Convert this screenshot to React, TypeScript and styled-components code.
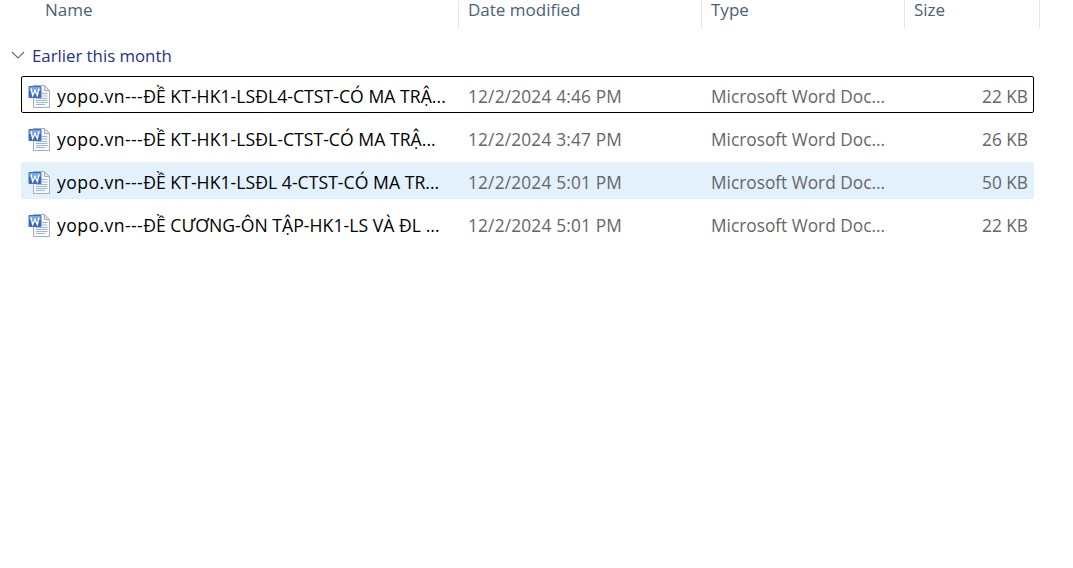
import React from "react";
import styled, { createGlobalStyle } from "styled-components";

const Global = createGlobalStyle`
  html, body { margin: 0; padding: 0; background: #fff; }
  body { font-family: "Open Sans", "Noto Sans", sans-serif; overflow: hidden; }
`;

const Page = styled.div`
  width: 1073px;
  height: 568px;
  background: #fff;
  display: flex;
  flex-direction: column;
`;

const Header = styled.div`
  display: grid;
  grid-template-columns: 459px 243px 203px 135px;
  height: 29px;
`;

const HeaderCell = styled.div<{ $first?: boolean }>`
  font-size: 17px;
  line-height: 20px;
  color: #4c607a;
  padding-left: ${(p) => (p.$first ? "45px" : "9px")};
  border-right: 1px solid #e5e5e5;
  white-space: nowrap;
`;

const Group = styled.div`
  display: flex;
  align-items: center;
  height: 24px;
  margin-top: 14px;
  padding-left: 11px;
  gap: 7px;
  color: #1e3287;
  font-size: 16.8px;
`;

const List = styled.div`
  display: flex;
  flex-direction: column;
  gap: 6px;
  margin: 9px 0 0 21px;
  width: 1013px;
`;

const Row = styled.div<{ $focused?: boolean; $selected?: boolean }>`
  display: grid;
  grid-template-columns: 437px 243px 203px 130px;
  align-items: center;
  height: 37px;
  padding-top: 3px;
  box-sizing: border-box;
  border-radius: 2px;
  background: ${(p) => (p.$selected ? "#e3f1fc" : "transparent")};
  outline: ${(p) => (p.$focused ? "1px solid #000" : "none")};
  outline-offset: -1px;
  font-size: 17.3px;
`;

const NameCell = styled.div`
  display: flex;
  align-items: center;
  gap: 6px;
  padding-left: 7px;
  color: #000;
  min-width: 0;
`;

const NameText = styled.span`
  width: 395px;
  white-space: nowrap;
  overflow: hidden;
  flex: none;
  font-size: 17.6px;
  letter-spacing: 0.04px;
`;

const Prefix = styled.span`
  letter-spacing: 0.42px;
`;

const Muted = styled.div<{ $right?: boolean; $wide?: boolean }>`
  color: #666;
  white-space: nowrap;
  letter-spacing: ${(p) => (p.$wide ? "0.18px" : "0")};
  padding-left: ${(p) => (p.$right ? "0" : "10px")};
  padding-right: ${(p) => (p.$right ? "6px" : "0")};
  text-align: ${(p) => (p.$right ? "right" : "left")};
`;

const Chevron = () => (
  <svg width="14" height="9" viewBox="0 0 14 9" fill="none" stroke="#6b6b6b" strokeWidth="1.1">
    <path d="M1 1l6 6 6-6" />
  </svg>
);

const WordIcon = () => (
  <svg width="23" height="23" viewBox="0 0 23 23">
    <path d="M5.5 0.5h11l5 5v17h-16z" fill="#f8fafd" stroke="#a3afbc" />
    <path d="M16.5 0.5v5h5z" fill="#dfe7ef" stroke="#a3afbc" />
    <path d="M14 8.5h5.5M14 11h5.5M8 13.5h11.5M8 15.5h11.5M8 17.5h11.5M8 19.5h9" stroke="#9db6d3" strokeWidth="1" />
    <rect x="0.5" y="1" width="13" height="12" rx="1" fill="#3a6cc0" />
    <rect x="1.5" y="2" width="11" height="4" fill="#7ba6e4" />
    <path d="M3 3.5l1.7 7 2.3-5 2.3 5 1.7-7" fill="none" stroke="#fff" strokeWidth="1.4" />
  </svg>
);

const rows = [
  { rest: "ĐỀ KT-HK1-LSĐL4-CTST-CÓ MA TRẬ...", date: "12/2/2024 4:46 PM", size: "22 KB", focused: true },
  { rest: "ĐỀ KT-HK1-LSĐL-CTST-CÓ MA TRẬ...", date: "12/2/2024 3:47 PM", size: "26 KB" },
  { rest: "ĐỀ KT-HK1-LSĐL 4-CTST-CÓ MA TR...", date: "12/2/2024 5:01 PM", size: "50 KB", selected: true },
  { rest: "ĐỀ CƯƠNG-ÔN TẬP-HK1-LS VÀ ĐL ...", date: "12/2/2024 5:01 PM", size: "22 KB" },
];

export default function App() {
  return (
    <Page>
      <Global />
      <Header>
        <HeaderCell $first>Name</HeaderCell>
        <HeaderCell>Date modified</HeaderCell>
        <HeaderCell>Type</HeaderCell>
        <HeaderCell>Size</HeaderCell>
      </Header>
      <Group>
        <Chevron />
        Earlier this month
      </Group>
      <List>
        {rows.map((r) => (
          <Row key={r.rest} $focused={r.focused} $selected={r.selected}>
            <NameCell>
              <WordIcon />
              <NameText>
                <Prefix>yopo.vn---</Prefix>
                {r.rest}
              </NameText>
            </NameCell>
            <Muted $wide>{r.date}</Muted>
            <Muted>Microsoft Word Doc...</Muted>
            <Muted $right>{r.size}</Muted>
          </Row>
        ))}
      </List>
    </Page>
  );
}
